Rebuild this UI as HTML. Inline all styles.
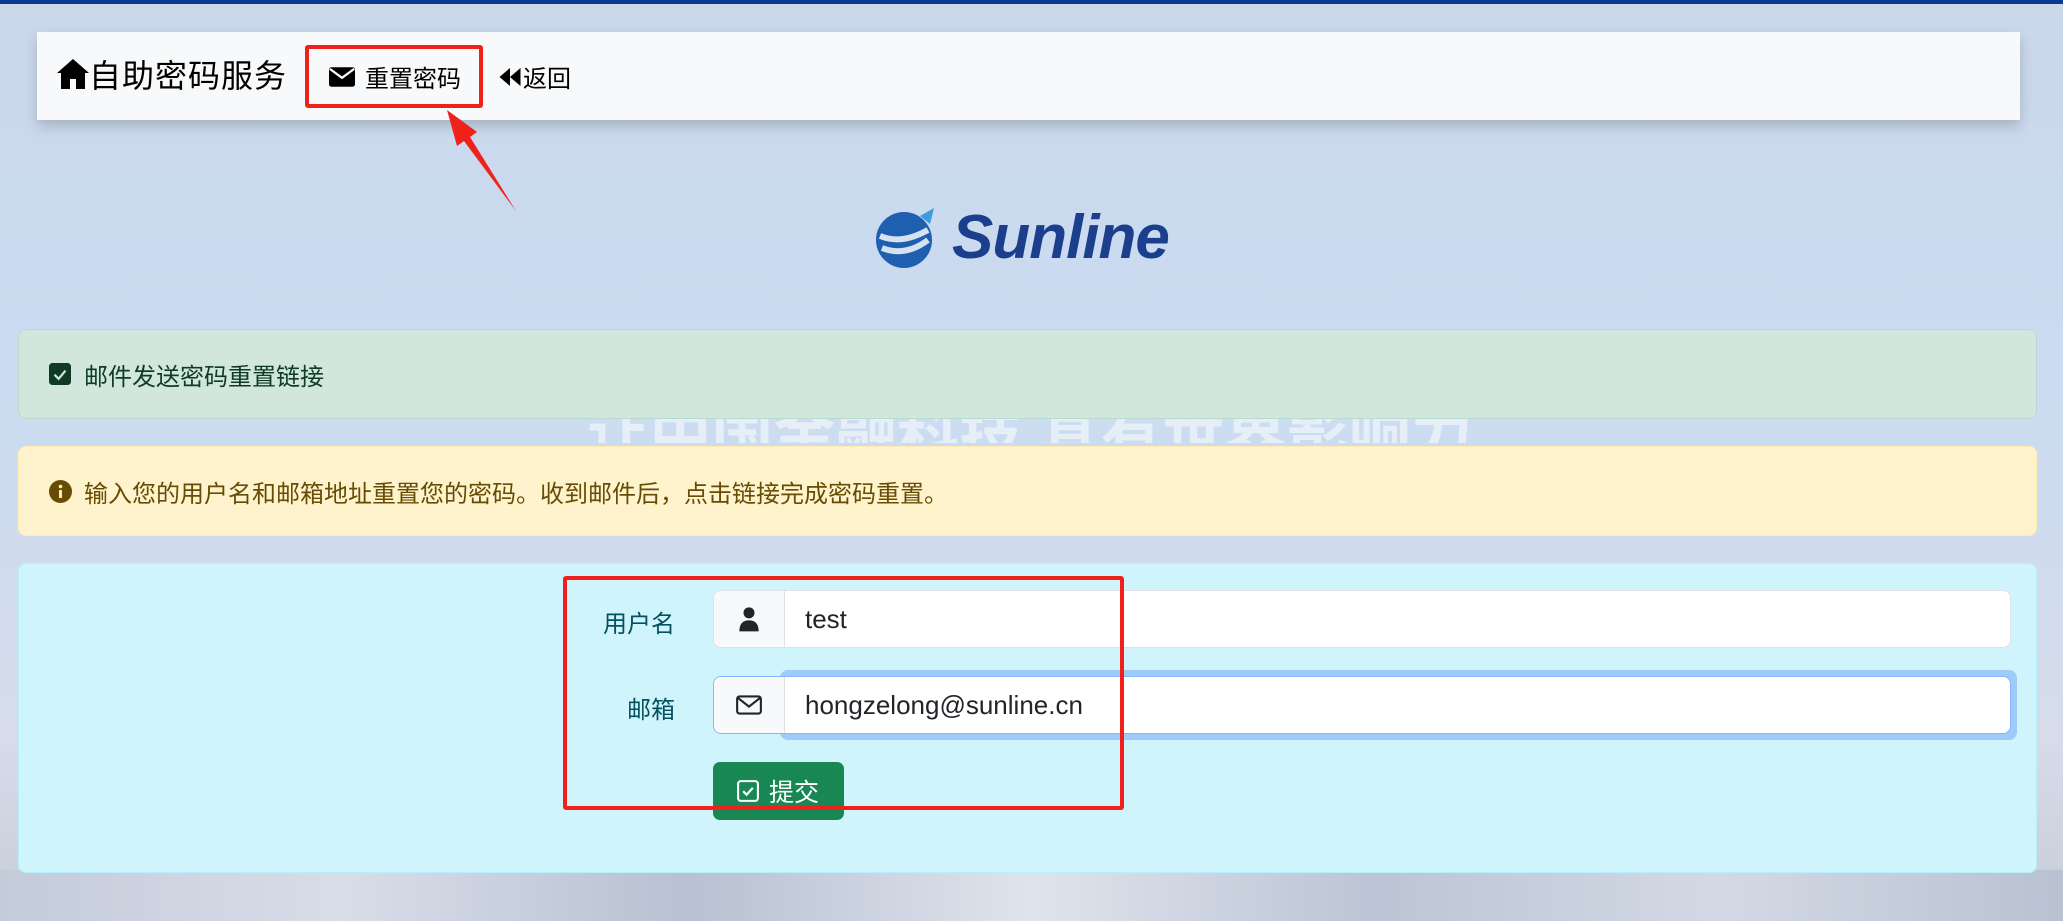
<!DOCTYPE html>
<html><head><meta charset="utf-8"><style>
*{box-sizing:border-box;margin:0;padding:0}
body{width:2063px;height:921px;overflow:hidden;position:relative;font-family:"Liberation Sans","Noto Sans CJK SC",sans-serif;background:linear-gradient(180deg,#cbd7ea 0%,#cadcf2 40%,#d6dcea 80%,#c7ccd8 100%);}
.abs{position:absolute}
.topline{left:0;top:0;width:2063px;height:4px;background:#0a3a8f}
.nav{left:37px;top:32px;width:1983px;height:88px;background:#f8f9fa;box-shadow:0 6px 12px rgba(0,0,0,.18)}
.red{border:4px solid #f0201a;border-radius:3px}
.alert{left:18px;width:2019px;border-radius:8px;font-size:24px;display:flex;align-items:center;padding-left:30px}
.lbl{font-size:24px;color:#055160;text-align:right;width:140px}
.ig{left:713px;width:1298px;height:58px;display:flex;border:1px solid #dee2e6;border-radius:8px;background:#fff;overflow:hidden}
.ig .ad{width:71px;background:#f8f9fa;border-right:1px solid #dee2e6;display:flex;align-items:center;justify-content:center}
.ig .tx{padding-left:20px;font-size:26px;color:#212529;display:flex;align-items:center}
</style></head><body>
<div class="abs topline"></div>
<div class="abs" style="left:0;top:870px;width:2063px;height:51px;background:linear-gradient(90deg,#c4cbd9,#d8dde8,#b8c1d2,#dfe3ec,#bcc5d5,#d3d9e4,#b9c2d2)"></div>
<div class="abs" style="left:470px;top:395px;width:1120px;color:rgba(255,255,255,.5);font-size:62px;font-weight:bold;text-align:center;line-height:60px;overflow:hidden;height:48px;padding-top:12px">让中国金融科技 具有世界影响力</div>
<div class="abs nav">
 <div class="abs" style="left:20px;top:19px;font-size:32px;color:#000;display:flex;align-items:center">
  <svg width="32" height="30" viewBox="0 0 16 15"><path d="M8 0L0 7h2v8h4.5v-5h3v5H14V7h2z" fill="#000"/></svg><span style="letter-spacing:1px">自助密码服务</span></div>
 <div class="abs" style="left:292px;top:27px;font-size:24px;display:flex;align-items:center">
  <svg width="26" height="20" viewBox="0 0 16 12" style="margin-right:10px"><rect x="0" y="0" width="16" height="12" rx="1.5" fill="#000"/><path d="M0.5 1L8 6.5 15.5 1" stroke="#f8f9fa" stroke-width="1.4" fill="none"/></svg>重置密码</div>
 <div class="abs" style="left:460px;top:27px;font-size:24px;display:flex;align-items:center">
  <svg width="26" height="18" viewBox="0 0 16 12"><path d="M8 0L1 6l7 6zM15 0L8 6l7 6z" fill="#000"/></svg>返回</div>
</div>
<div class="abs red" style="left:305px;top:45px;width:178px;height:63px"></div>
<svg class="abs" style="left:0;top:0" width="600" height="240"><polygon points="447,110 477,132 470,137 516,211 464,141 457,146" fill="#f0201a"/></svg>
<div class="abs" style="left:874px;top:202px;display:flex;align-items:center">
 <svg width="64" height="64" viewBox="0 0 64 64"><circle cx="30" cy="34" r="28" fill="#1f5fb0"/><path d="M6 30c15 6 30 4 48-6M8 42c15 6 30 4 46-8" stroke="#d6e2f2" stroke-width="6" fill="none"/><path d="M46 10L60 2 56 18z" fill="#3a9de0"/></svg>
 <span style="font-size:62px;font-weight:bold;font-style:italic;color:#1b3f8c;margin-left:14px;letter-spacing:-1px">Sunline</span></div>
<div class="abs alert" style="top:329px;height:90px;background:#d1e7dd;border:1px solid #badbcc;color:#0f3b24">
 <svg width="22" height="22" viewBox="0 0 16 16" style="margin-right:13px"><rect width="16" height="16" rx="2.5" fill="#0f3b24"/><path d="M4 8.5l3 3 5-6" stroke="#d1e7dd" stroke-width="1.6" fill="none"/></svg>邮件发送密码重置链接</div>
<div class="abs alert" style="top:446px;height:90px;background:#fff3cd;border:1px solid #ffecb5;color:#664d03">
 <svg width="23" height="23" viewBox="0 0 16 16" style="margin-right:12px"><circle cx="8" cy="8" r="8" fill="#664d03"/><rect x="7" y="7" width="2" height="5.5" fill="#fff3cd"/><circle cx="8" cy="4.5" r="1.2" fill="#fff3cd"/></svg>输入您的用户名和邮箱地址重置您的密码。收到邮件后，点击链接完成密码重置。</div>
<div class="abs" style="left:18px;top:563px;width:2019px;height:310px;background:#cff4fc;border:1px solid #b6effb;border-radius:8px"></div>
<div class="abs lbl" style="left:535px;top:604px">用户名</div>
<div class="abs lbl" style="left:535px;top:690px">邮箱</div>
<div class="abs ig" style="top:590px"><div class="ad"><svg width="22" height="26" viewBox="0 0 16 18"><circle cx="8" cy="4.5" r="4" fill="#212529"/><path d="M1 18c0-6 3-8 7-8s7 2 7 8z" fill="#212529"/></svg></div><div class="tx">test</div></div>
<div class="abs" style="left:780px;top:670px;width:1237px;height:70px;border-radius:8px;background:#9fcbfa"></div>
<div class="abs ig" style="top:676px;border-color:#86b7fe"><div class="ad" style="background:#f8f9fa"><svg width="26" height="20" viewBox="0 0 16 12"><rect x="0.7" y="0.7" width="14.6" height="10.6" rx="1.5" fill="none" stroke="#212529" stroke-width="1.3"/><path d="M1 1.5L8 7l7-5.5" stroke="#212529" stroke-width="1.3" fill="none"/></svg></div><div class="tx">hongzelong@sunline.cn</div></div>
<div class="abs" style="left:713px;top:762px;width:131px;height:58px;background:#198754;border-radius:7px;color:#fff;font-size:25px;display:flex;align-items:center;padding-left:24px">
 <svg width="22" height="22" viewBox="0 0 16 16" style="margin-right:10px"><rect x="0.8" y="0.8" width="14.4" height="14.4" rx="2" fill="none" stroke="#fff" stroke-width="1.5"/><path d="M4.5 8.2l2.5 2.5 4.5-5" stroke="#fff" stroke-width="1.6" fill="none"/></svg>提交</div>
<div class="abs red" style="left:563px;top:576px;width:561px;height:234px"></div>
</body></html>
